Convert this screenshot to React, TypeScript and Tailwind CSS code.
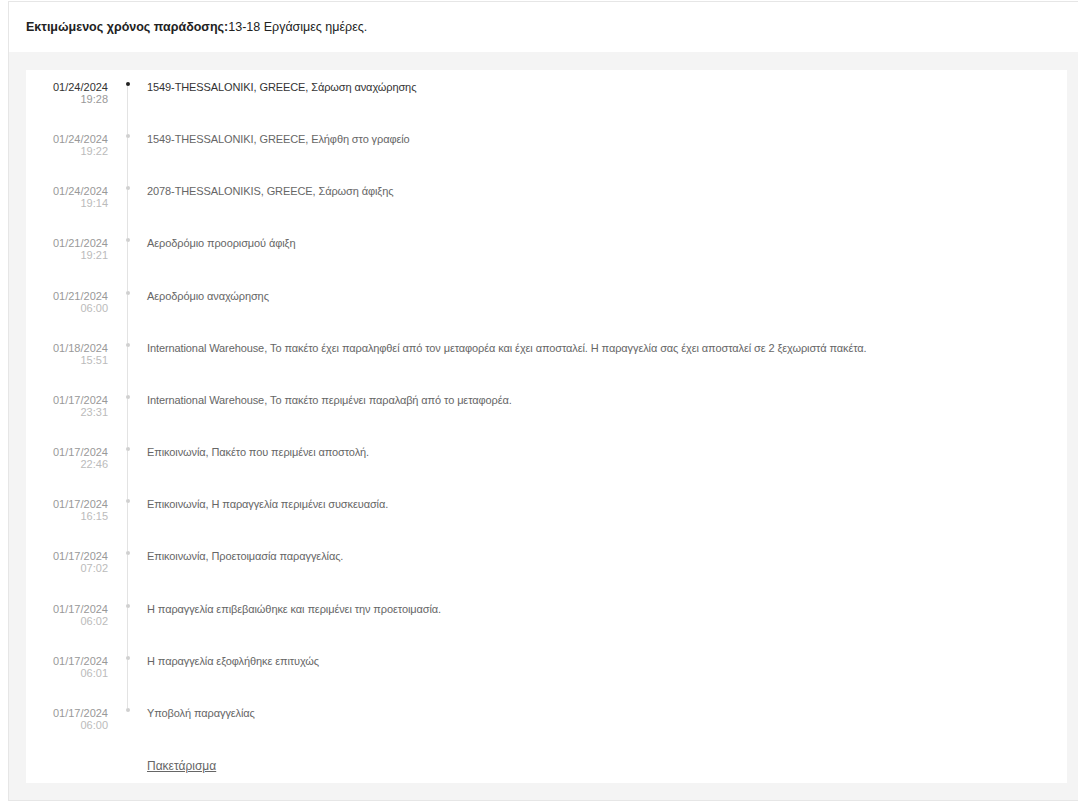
import React from 'react';

interface TrackEvent {
  date: string;
  time: string;
  text: string;
}

const events: TrackEvent[] = [
  { date: '01/24/2024', time: '19:28', text: '1549-THESSALONIKI, GREECE, Σάρωση αναχώρησης' },
  { date: '01/24/2024', time: '19:22', text: '1549-THESSALONIKI, GREECE, Ελήφθη στο γραφείο' },
  { date: '01/24/2024', time: '19:14', text: '2078-THESSALONIKIS, GREECE, Σάρωση άφιξης' },
  { date: '01/21/2024', time: '19:21', text: 'Αεροδρόμιο προορισμού άφιξη' },
  { date: '01/21/2024', time: '06:00', text: 'Αεροδρόμιο αναχώρησης' },
  {
    date: '01/18/2024',
    time: '15:51',
    text: 'International Warehouse, Το πακέτο έχει παραληφθεί από τον μεταφορέα και έχει αποσταλεί. Η παραγγελία σας έχει αποσταλεί σε 2 ξεχωριστά πακέτα.',
  },
  { date: '01/17/2024', time: '23:31', text: 'International Warehouse, Το πακέτο περιμένει παραλαβή από το μεταφορέα.' },
  { date: '01/17/2024', time: '22:46', text: 'Επικοινωνία, Πακέτο που περιμένει αποστολή.' },
  { date: '01/17/2024', time: '16:15', text: 'Επικοινωνία, Η παραγγελία περιμένει συσκευασία.' },
  { date: '01/17/2024', time: '07:02', text: 'Επικοινωνία, Προετοιμασία παραγγελίας.' },
  { date: '01/17/2024', time: '06:02', text: 'Η παραγγελία επιβεβαιώθηκε και περιμένει την προετοιμασία.' },
  { date: '01/17/2024', time: '06:01', text: 'Η παραγγελία εξοφλήθηκε επιτυχώς' },
  { date: '01/17/2024', time: '06:00', text: 'Υποβολή παραγγελίας' },
];

const TimelineRow: React.FC<{ ev: TrackEvent; first: boolean; last: boolean }> = ({ ev, first, last }) => (
  <div className="flex h-[52.17px]">
    <div className="w-[82px] shrink-0 text-right text-[11px] leading-[12px]">
      <div className={first ? 'text-[#333]' : 'text-[#999]'}>{ev.date}</div>
      <div className={first ? 'text-[#999]' : 'text-[#bbb]'}>{ev.time}</div>
    </div>
    <div className="relative w-[39px] shrink-0">
      {!last && <div className="absolute left-[19px] top-[5px] bottom-[-1px] w-px bg-[#e3e3e3]" />}
      <div
        className={`absolute left-[18px] top-[1px] h-[4px] w-[4px] rounded-full ${first ? 'bg-[#222]' : 'bg-[#d0d0d0]'}`}
      />
    </div>
    <div className={`text-[11px] leading-[12px] tracking-[-0.1px] ${first ? 'text-[#333]' : 'text-[#666]'}`}>{ev.text}</div>
  </div>
);

export default function App() {
  return (
    <div className="min-h-[808px] bg-white pt-px pl-[8px] font-['Liberation_Sans',Arial,sans-serif]">
      <div className="border border-[#e6e6e6] border-r-0">
        <div className="flex h-[50px] items-center pl-[17px] text-[12.5px] text-[#222]">
          <span className="font-bold">Εκτιμώμενος χρόνος παράδοσης:</span>
          <span>13-18 Εργάσιμες ημέρες.</span>
        </div>
        <div className="bg-[#f4f4f4] pt-[18px] pb-[17px] pl-[17px] pr-[11px]">
          <div className="bg-white pt-[11px] pb-[10px]">
            {events.map((ev, i) => (
              <TimelineRow key={i} ev={ev} first={i === 0} last={i === events.length - 1} />
            ))}
            <div className="pl-[121px] text-[12px] leading-[14px]">
              <a href="#" className="text-[#666] underline">
                Πακετάρισμα
              </a>
            </div>
          </div>
        </div>
      </div>
    </div>
  );
}
